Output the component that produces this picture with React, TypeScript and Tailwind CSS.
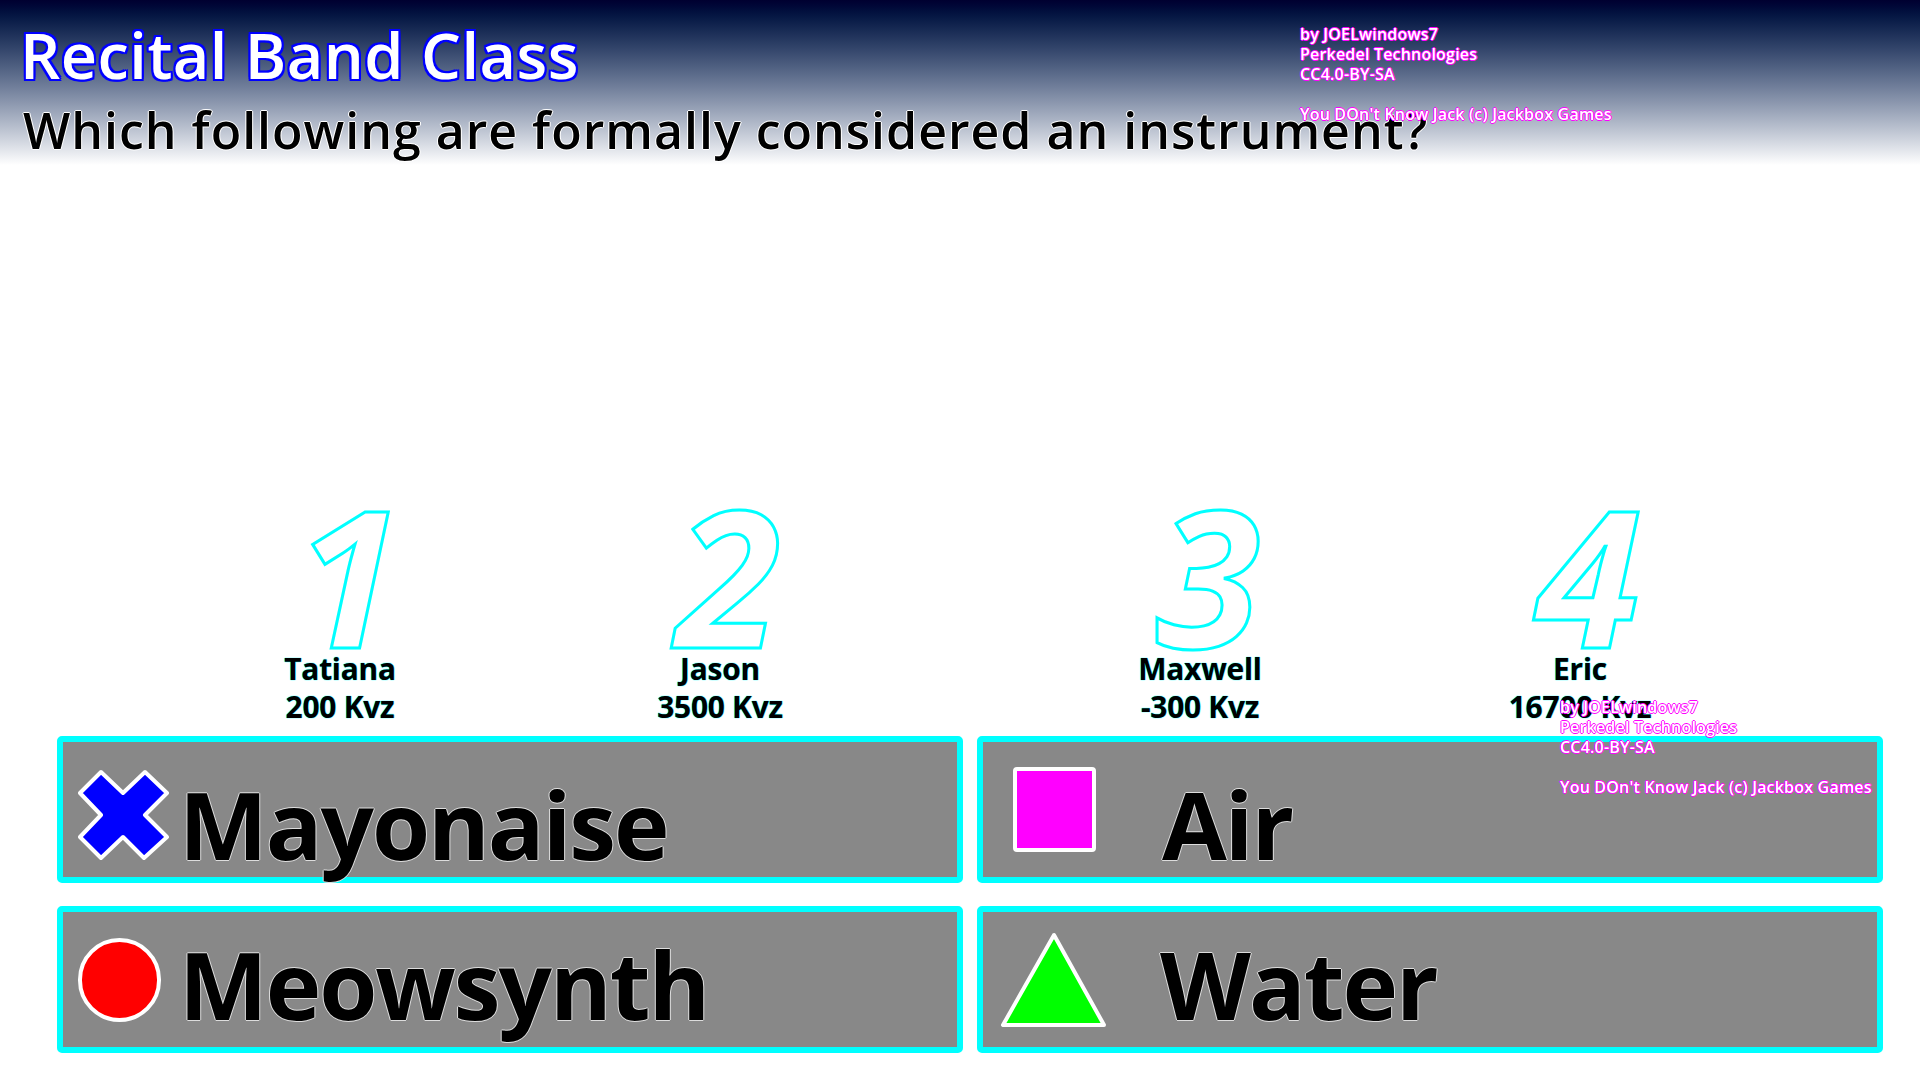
import React from "react";

const credits = ["by JOELwindows7", "Perkedel Technologies", "CC4.0-BY-SA", "", "You DOn't Know Jack (c) Jackbox Games"];

const players = [
  { num: "1", name: "Tatiana", score: "200 Kvz", ml: "ml-[220px]" },
  { num: "2", name: "Jason", score: "3500 Kvz", ml: "ml-[140px]" },
  { num: "3", name: "Maxwell", score: "-300 Kvz", ml: "ml-[240px]" },
  { num: "4", name: "Eric", score: "16700 Kvz", ml: "ml-[140px]" },
];

function CrossIcon() {
  return (
    <svg width="92" height="94" viewBox="-2 -2 92 94">
      <polygon
        points="21,2 0,23 21,45 0,67 21,88 43,67 64,88 87,67 65,45 87,23 65,2 43,23"
        fill="#0000ff"
        stroke="#ffffff"
        strokeWidth="4"
        strokeLinejoin="round"
      />
    </svg>
  );
}

function CircleIcon() {
  return <div className="h-[84px] w-[83px] rounded-full border-[4px] border-white bg-[#ff0000]" />;
}

function SquareIcon() {
  return <div className="h-[85px] w-[83px] rounded-[4px] border-[4px] border-white bg-[#ff00ff]" />;
}

function TriangleIcon() {
  return (
    <svg width="109" height="96" viewBox="-1 -1 109 96">
      <polygon points="54,2 3,92 104,92" fill="#00ff00" stroke="#ffffff" strokeWidth="4" strokeLinejoin="round" />
    </svg>
  );
}

const answers = [
  { label: "Mayonaise", icon: <CrossIcon />, iconCls: "ml-[15px] mt-[26px] w-[92px]", textCls: "ml-[9px] mt-[35px]" },
  { label: "Air", icon: <SquareIcon />, iconCls: "ml-[30px] mt-[25px] w-[83px]", textCls: "ml-[66px] mt-[35px]" },
  { label: "Meowsynth", icon: <CircleIcon />, iconCls: "ml-[15px] mt-[26px] w-[83px]", textCls: "ml-[18px] mt-[25px]" },
  { label: "Water", icon: <TriangleIcon />, iconCls: "ml-[16px] mt-[20px] w-[109px]", textCls: "ml-[52px] mt-[25px]" },
];

function Credits({ className }: { className: string }) {
  return (
    <div
      className={`absolute text-[16px] leading-[20px] font-semibold tracking-[0.2px] text-white [text-shadow:1px_0_0_#ff00ff,-1px_0_0_#ff00ff,0_1px_0_#ff00ff,0_-1px_0_#ff00ff] ${className}`}
    >
      {credits.map((c, i) => (
        <div key={i} className="h-[20px] whitespace-nowrap">
          {c}
        </div>
      ))}
    </div>
  );
}

export default function App() {
  return (
    <div className="relative h-[1080px] w-[1920px] overflow-hidden bg-white font-['Open_Sans','Noto_Sans',sans-serif]">
      {/* header */}
      <div className="h-[165px] bg-linear-to-b from-[#000030] to-white pt-[23px]">
        <h1 className="pl-[20px] text-[63px] leading-none font-semibold tracking-[0.5px] text-white [text-shadow:2px_0_0_#0000ff,-2px_0_0_#0000ff,0_2px_0_#0000ff,0_-2px_0_#0000ff,2px_2px_0_#0000ff,-2px_-2px_0_#0000ff,2px_-2px_0_#0000ff,-2px_2px_0_#0000ff]">
          Recital Band Class
        </h1>
        <h2 className="mt-[19px] pl-[23px] text-[50px] leading-none font-semibold tracking-[1px] text-black [text-shadow:1px_0_0_#fff,-1px_0_0_#fff,0_1px_0_#fff,0_-1px_0_#fff]">
          Which following are formally considered an instrument?
        </h2>
      </div>

      {/* players */}
      <div className="mt-[335px] flex">
        {players.map((p) => (
          <div key={p.num} className={`flex w-[240px] flex-col items-center ${p.ml}`}>
            <div className="h-[150px] pl-[16px] text-[190px] leading-[150px] font-bold italic text-transparent [-webkit-text-stroke:3px_#00ffff]">
              {p.num}
            </div>
            <div className="text-[30px] leading-[38px] font-bold tracking-[-0.3px] text-black [text-shadow:0_0_1px_#00ffff,0_0_1px_#00ffff]">
              {p.name}
            </div>
            <div className="text-[30px] leading-[38px] font-bold tracking-[-0.3px] text-black [text-shadow:0_0_1px_#00ffff,0_0_1px_#00ffff]">
              {p.score}
            </div>
          </div>
        ))}
      </div>

      {/* answers */}
      <div className="mt-[10px] ml-[57px] grid w-[1826px] grid-cols-2 gap-x-[14px] gap-y-[23px]">
        {answers.map((a) => (
          <div key={a.label} className="flex h-[147px] items-start rounded-[5px] border-[6px] border-[#00ffff] bg-[#888888]">
            <div className={`flex shrink-0 justify-center ${a.iconCls}`}>{a.icon}</div>
            <div
              className={`text-[94px] leading-none font-bold tracking-[-2px] text-black [text-shadow:1px_0_0_#ddd,-1px_0_0_#ddd,0_1px_0_#ddd,0_-1px_0_#ddd] ${a.textCls}`}
            >
              {a.label}
            </div>
          </div>
        ))}
      </div>

      <Credits className="left-[1300px] top-[24px]" />
      <Credits className="left-[1560px] top-[697px]" />
    </div>
  );
}
